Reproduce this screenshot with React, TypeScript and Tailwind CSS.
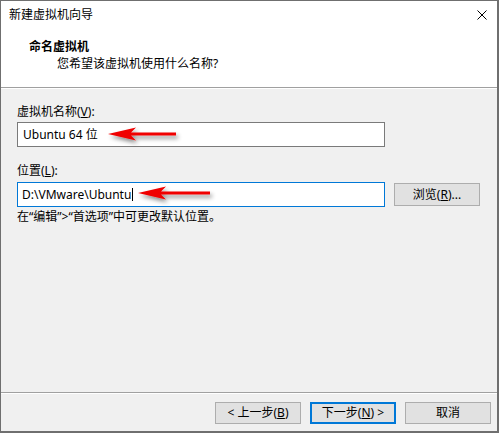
import React from 'react'

const font = { fontFamily: '"Noto Sans", "Noto Sans CJK SC", sans-serif' }

function RedArrow({ x1, x2, y }: { x1: number; x2: number; y: number }) {
  const d = `M${x1},${y} L${x1 + 28},${y - 6.5} L${x1 + 23},${y - 1.5} L${x2},${y - 1.5} L${x2},${y + 1.5} L${x1 + 23},${y + 1.5} L${x1 + 28},${y + 6.5} Z`
  return <path d={d} fill="#f00000" filter="url(#shadow)" />
}

function Button({
  children,
  primary,
}: {
  children: React.ReactNode
  primary?: boolean
}) {
  return (
    <div
      className={`flex h-[22px] w-[86px] items-center justify-center bg-[#e1e1e1] text-[12px] text-black ${
        primary ? 'border-2 border-[#0078d7]' : 'border border-[#adadad]'
      }`}
    >
      {children}
    </div>
  )
}

export default function App() {
  return (
    <div
      className="relative flex h-[433px] w-[499px] flex-col border-t border-l border-r-2 border-b-2 border-[#6f6f6f] bg-[#f0f0f0] text-[12px] leading-[16px] text-black"
      style={font}
    >
      <header className="h-[87px] border-b border-[#a0a0a0] bg-white">
        <div className="flex h-[28px] items-center justify-between pl-[8px] pr-[10px]">
          <span>新建虚拟机向导</span>
          <svg width="10" height="10" viewBox="0 0 10 10">
            <path d="M0.5,0.5 L9.5,9.5 M9.5,0.5 L0.5,9.5" stroke="#000" strokeWidth="1" />
          </svg>
        </div>
        <div className="mt-[10px] pl-[28px] font-bold">命名虚拟机</div>
        <div className="mt-[1px] pl-[56px]">您希望该虚拟机使用什么名称?</div>
      </header>
      <div className="h-px bg-white" />

      <main className="flex flex-1 flex-col pl-[16px] pt-[15px]">
        <label>
          虚拟机名称(<span className="underline">V</span>):
        </label>
        <div className="mt-[2px] flex h-[25px] w-[368px] items-center border border-[#7a7a7a] bg-white pl-[5px]">
          Ubuntu 64 位
        </div>

        <label className="mt-[16px]">
          位置(<span className="underline">L</span>):
        </label>
        <div className="mt-[3px] flex items-center gap-[9px]">
          <div className="flex h-[25px] w-[368px] items-center border border-[#0078d7] bg-white pl-[4px]">
            D:\VMware\Ubuntu
            <span className="ml-px h-[13px] w-px bg-black" />
          </div>
          <div className="flex h-[23px] w-[86px] items-center justify-center border border-[#adadad] bg-[#e1e1e1]">
            浏览(<span className="underline">R</span>)...
          </div>
        </div>
        <p className="mt-[2px]">在“编辑”&gt;“首选项”中可更改默认位置。</p>
      </main>

      <footer className="h-[39px] border-t border-[#a0a0a0]">
        <div className="h-px bg-white" />
        <div className="flex justify-end gap-[9px] pr-[6px] pt-[8px]">
          <Button>
            &lt; 上一步(<span className="underline">B</span>)
          </Button>
          <Button primary>
            下一步(<span className="underline">N</span>) &gt;
          </Button>
          <Button>取消</Button>
        </div>
      </footer>

      <svg className="pointer-events-none absolute left-[-1px] top-[-1px]" width="499" height="433">
        <defs>
          <filter id="shadow" x="-20%" y="-50%" width="150%" height="250%">
            <feDropShadow dx="2" dy="3" stdDeviation="2" floodColor="#000" floodOpacity="0.45" />
          </filter>
        </defs>
        <RedArrow x1={108} x2={176} y={134} />
        <RedArrow x1={138} x2={210} y={193} />
      </svg>
    </div>
  )
}
